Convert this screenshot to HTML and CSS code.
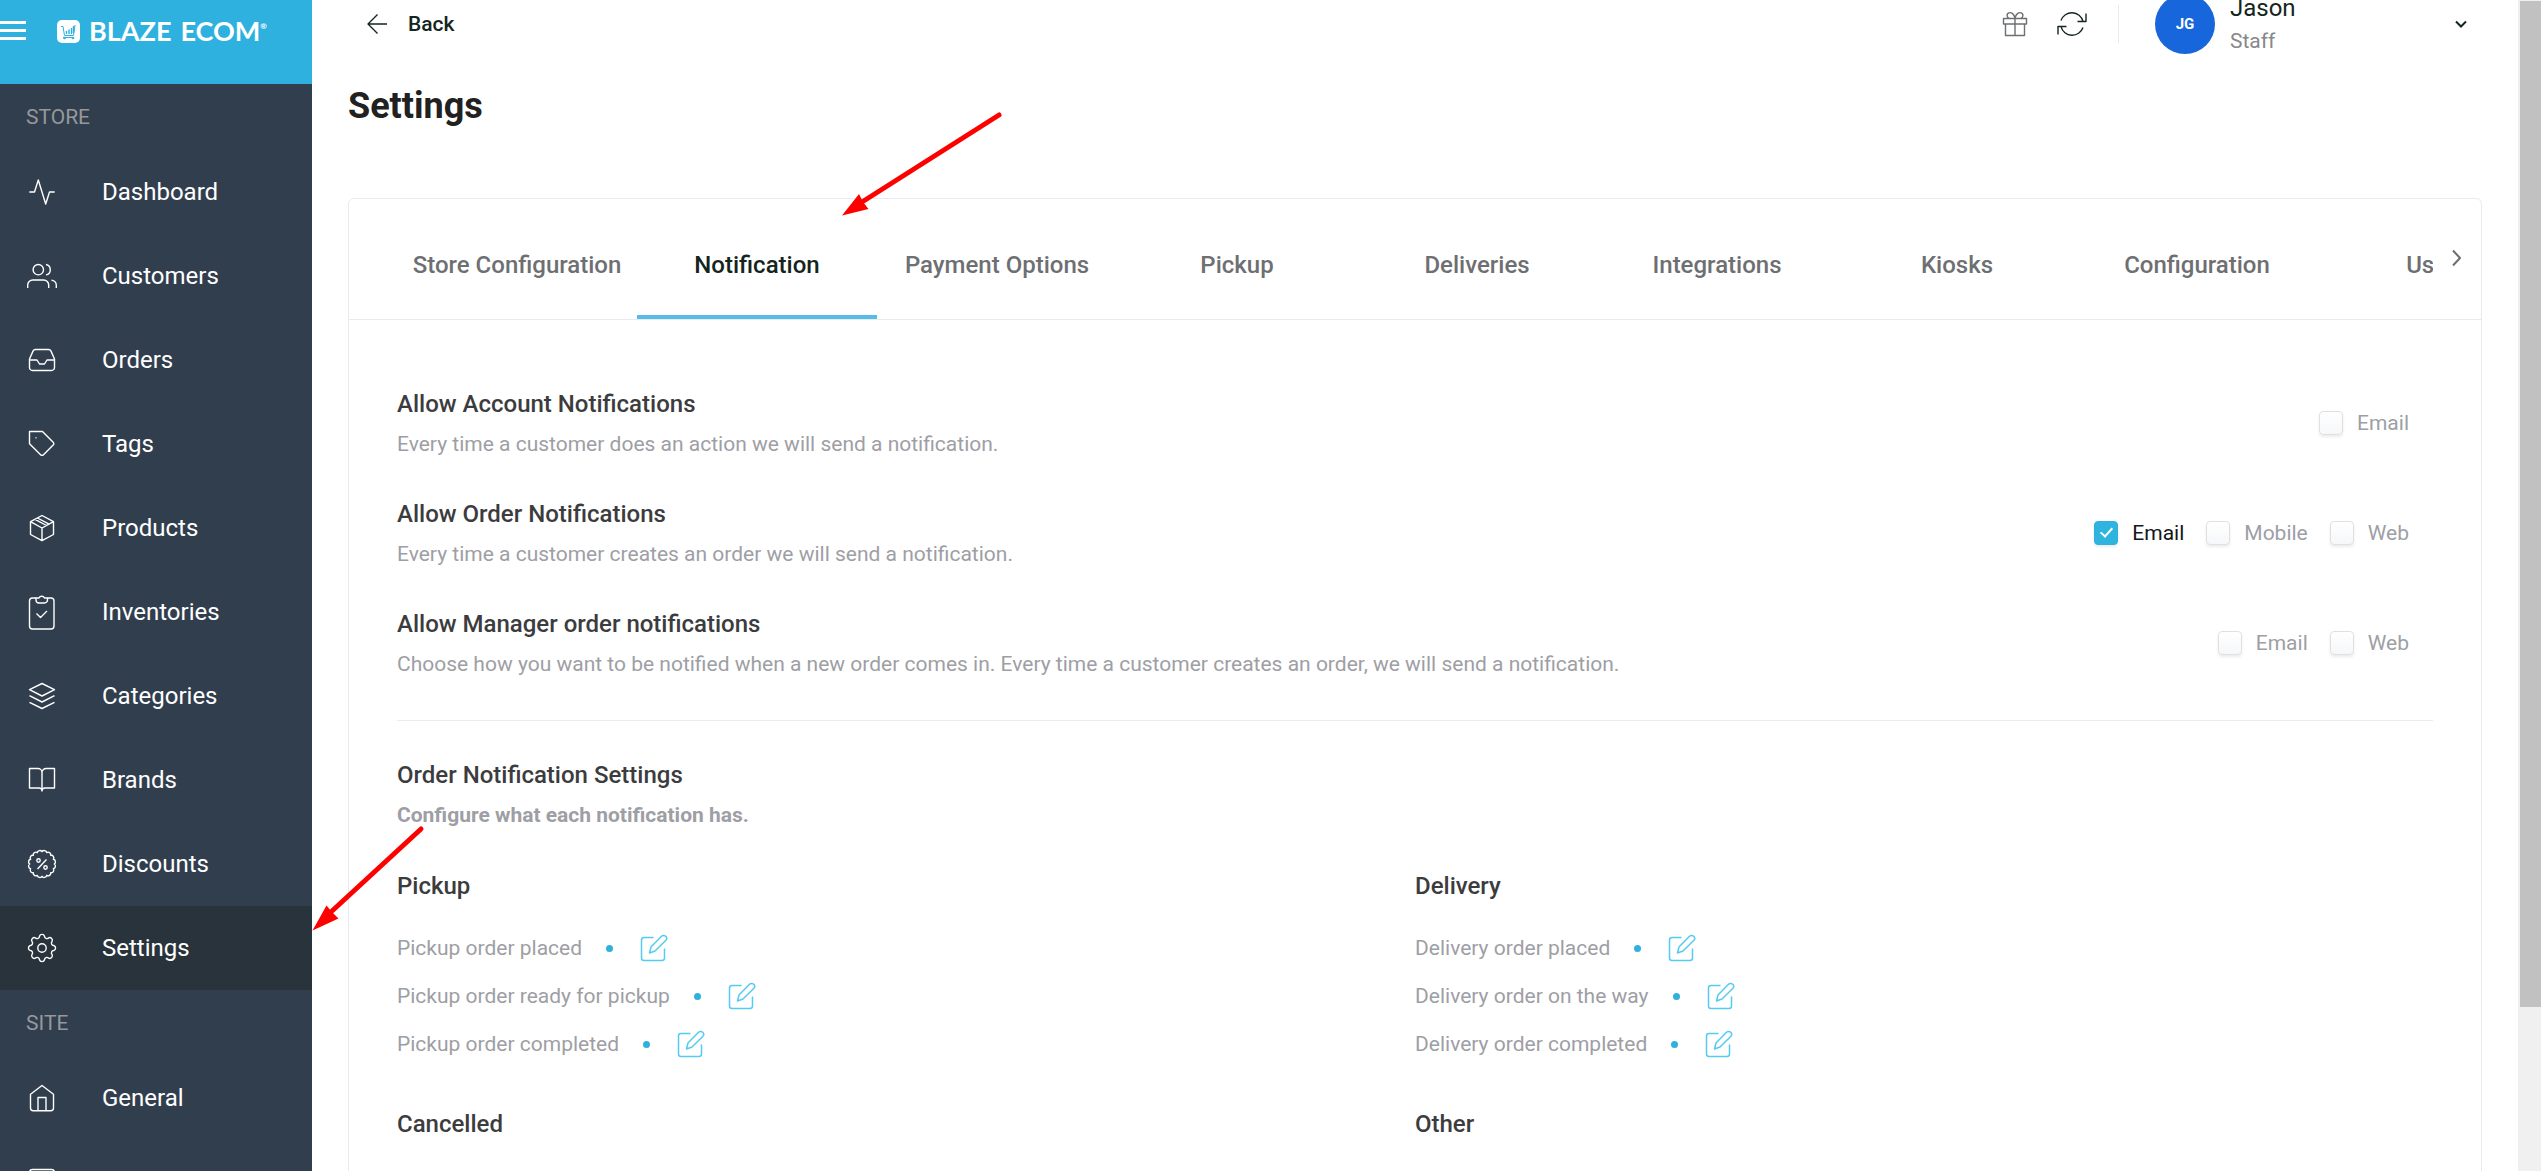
FILE: index.html
```html
<!DOCTYPE html>
<html lang="en">
<head>
    <meta charset="UTF-8">
    <meta name="viewport" content="width=device-width, initial-scale=1.0">
    <title>Settings</title>
    <link rel="stylesheet" href="styles.css">
</head>
<body>
    <aside class="sidebar">
        <div class="brand">
            <button type="button" class="menu-btn" aria-label="Menu"><span></span><span></span><span></span></button>
            <a href="#" class="logo">
                <svg class="logo-mark" viewBox="0 0 23 23">
                    <rect width="23" height="23" rx="5" fill="#fff"/>
                    <path d="M4 6.500h2l1.500 9h9L18 5M6 17.500h11" fill="none" stroke="#2eb1de" stroke-width="1"/>
                    <path d="M9.500 14v-3M12 14v-4.500M14.500 14V8M16.500 13V6" stroke="#2eb1de" stroke-width="1.400"/>
                    <circle cx="7.500" cy="18" r="1.300" fill="#2eb1de"/>
                    <circle cx="16" cy="18" r="1.300" fill="#2eb1de"/>
                </svg>
                <span>BLAZE</span><span>ECOM<sup>®</sup></span>
            </a>
        </div>
        <nav>
            <h2 class="nav-title">STORE</h2>
            <a href="#" class="nav-item">
                <svg class="icon" viewBox="0 0 32 32"><path d="M3.300 16h5.200l3.800-12 7.400 24 3.800-12h5.200"/></svg>
                Dashboard
            </a>
            <a href="#" class="nav-item">
                <svg class="icon" viewBox="0 0 32 32"><circle cx="12.300" cy="9.700" r="5.200"/><path d="M1.700 28v-3a5 5 0 0 1 5-5h11a5 5 0 0 1 5 5v3M20 4.500a5.300 5.300 0 0 1 0 10.400M25.500 20.200a5 5 0 0 1 4.800 5V28"/></svg>
                Customers
            </a>
            <a href="#" class="nav-item">
                <svg class="icon" viewBox="0 0 32 32"><path d="M3.500 16H11l2.500 4h5l2.500-4h7.500"/><path d="M9.500 5.500h13a3 3 0 0 1 2.500 1.600l3.500 7.900v8.500a3 3 0 0 1-3 3h-19a3 3 0 0 1-3-3V15L7 7.100a3 3 0 0 1 2.500-1.600z"/></svg>
                Orders
            </a>
            <a href="#" class="nav-item">
                <svg class="icon" viewBox="0 0 32 32"><path d="M3.500 3.500h13l10.700 10.700a2 2 0 0 1 0 2.900l-9.700 9.700a2 2 0 0 1-2.900 0L3.500 15.700z"/><path d="M9.500 9.800h1"/></svg>
                Tags
            </a>
            <a href="#" class="nav-item">
                <svg class="icon" viewBox="0 0 32 32"><path d="M16 3.500l11.500 6.200v12.800L16 28.700 4.500 22.500V9.700zM4.500 9.700L16 16l11.500-6.300M16 16v12.700M9 7.300l11.500 6.200M11.500 6L23 12.200"/></svg>
                Products
            </a>
            <a href="#" class="nav-item">
                <svg class="icon" viewBox="0 0 32 32"><path d="M10 2H6.500a3 3 0 0 0-3 3v25a3 3 0 0 0 3 3H25a3 3 0 0 0 3-3V5a3 3 0 0 0-3-3h-3.500"/><path d="M10 2h3a3 3 0 0 1 5.500 0h3v2a3 3 0 0 1-3 3H13a3 3 0 0 1-3-3zM10.500 17.500l4 4L21 15"/></svg>
                Inventories
            </a>
            <a href="#" class="nav-item">
                <svg class="icon" viewBox="0 0 32 32"><path d="M16 3.500l12.500 6.200L16 16 3.500 9.700zM3.500 15.700L16 22l12.500-6.300M3.500 22.300L16 28.500l12.500-6.200"/></svg>
                Categories
            </a>
            <a href="#" class="nav-item">
                <svg class="icon" viewBox="0 0 32 32"><path d="M3.500 4.500H12a4 4 0 0 1 4 4V27a3 3 0 0 0-3-3H3.500zM28.500 4.500H20a4 4 0 0 0-4 4V27a3 3 0 0 1 3-3h9.500z"/></svg>
                Brands
            </a>
            <a href="#" class="nav-item">
                <svg class="icon" viewBox="0 0 32 32"><path d="M28.300 16a2.600 2.600 0 0 1-.94 4.710a2.600 2.600 0 0 1-2.660 3.990a2.600 2.600 0 0 1-3.990 2.660a2.600 2.600 0 0 1-4.710.94a2.600 2.600 0 0 1-4.710-.94a2.600 2.600 0 0 1-3.990-2.660a2.600 2.600 0 0 1-2.660-3.990a2.600 2.600 0 0 1-.94-4.710a2.600 2.600 0 0 1 .94-4.710a2.600 2.600 0 0 1 2.660-3.990a2.600 2.600 0 0 1 3.990-2.660a2.600 2.600 0 0 1 4.710-.94a2.600 2.600 0 0 1 4.710.94a2.600 2.600 0 0 1 3.990 2.660a2.600 2.600 0 0 1 2.660 3.990a2.600 2.600 0 0 1 .94 4.710z"/><path d="M20.500 11.500l-9 9.500"/><circle cx="12.500" cy="12.500" r="1.700"/><circle cx="19.500" cy="19.500" r="1.700"/></svg>
                Discounts
            </a>
            <a href="#" class="nav-item active">
                <svg class="icon" viewBox="0 0 32 32"><path d="M27.700 13.500a2.600 2.600 0 0 1 0 5a2.400 2.400 0 0 0-1.640 4.040a2.600 2.600 0 0 1-3.520 3.520a2.400 2.400 0 0 0-4.040 1.640a2.600 2.600 0 0 1-5 0a2.400 2.400 0 0 0-4.040-1.640a2.600 2.600 0 0 1-3.520-3.520a2.400 2.400 0 0 0-1.640-4.040a2.600 2.600 0 0 1 0-5a2.400 2.400 0 0 0 1.640-4.040a2.600 2.600 0 0 1 3.520-3.520a2.400 2.400 0 0 0 4.040-1.640a2.600 2.600 0 0 1 5 0a2.400 2.400 0 0 0 4.040 1.640a2.600 2.600 0 0 1 3.520 3.520a2.400 2.400 0 0 0 1.640 4.040z"/><circle cx="16" cy="16" r="4.200"/></svg>
                Settings
            </a>
            <h2 class="nav-title">SITE</h2>
            <a href="#" class="nav-item">
                <svg class="icon" viewBox="0 0 32 32"><path d="M4.500 12.300L16 3.500l11.500 8.800V26a2.700 2.700 0 0 1-2.700 2.700H7.200A2.700 2.700 0 0 1 4.500 26zM12 28.700V15.500h8v13.200"/></svg>
                General
            </a>
            <a href="#" class="nav-item" aria-label="Pages">
                <svg class="icon" viewBox="0 0 32 32"><rect x="3.500" y="3.500" width="25" height="25" rx="3"/></svg>
            </a>
        </nav>
    </aside>

    <main class="main">
        <header class="topbar">
            <a href="#" class="back">
                <svg class="icon" viewBox="0 0 32 32"><path d="M16.500 6.500L7 16l9.500 9.500M7 16h19"/></svg>
                Back
            </a>
            <div class="topbar-right">
                <button type="button" class="icon-btn gift" aria-label="Gifts">
                    <svg class="icon" viewBox="0 0 32 32"><rect x="4.500" y="10.500" width="23" height="5.500"/><path d="M6.500 16v11.500h19V16M16 10.500v17M16 10c-1-4-3.500-6-6-5.200-3 1-2 4.500 0 5.700M16 10c1-4 3.500-6 6-5.200 3 1 2 4.500 0 5.700"/></svg>
                </button>
                <button type="button" class="icon-btn" aria-label="Refresh">
                    <svg class="icon" viewBox="0 0 32 32"><path d="M5 12.500a11.500 11.500 0 0 1 22 .9M30 5.500v8h-8.500M27 19.500a11.500 11.500 0 0 1-22-.9M2 26.500v-8h8.500"/></svg>
                </button>
                <button type="button" class="user">
                    <span class="avatar">JG</span>
                    <span class="user-text"><span class="user-name">Jason</span><span class="user-role">Staff</span></span>
                    <svg class="chevron" viewBox="0 0 16 16"><path d="M3 5.500l5 5 5-5"/></svg>
                </button>
            </div>
        </header>

        <h1>Settings</h1>

        <section class="card">
            <div class="tabs">
                <div class="tab-list">
                    <a href="#" class="tab">Store Configuration</a>
                    <a href="#" class="tab active">Notification</a>
                    <a href="#" class="tab">Payment Options</a>
                    <a href="#" class="tab">Pickup</a>
                    <a href="#" class="tab">Deliveries</a>
                    <a href="#" class="tab">Integrations</a>
                    <a href="#" class="tab">Kiosks</a>
                    <a href="#" class="tab">Configuration</a>
                    <a href="#" class="tab">Users</a>
                </div>
                <button type="button" class="tabs-next" aria-label="Next tabs">
                    <svg class="icon" viewBox="0 0 32 32"><path d="M12 8.500l7 7.500-7 7.500"/></svg>
                </button>
            </div>

            <form class="content">
                <div class="setting">
                    <div>
                        <h3>Allow Account Notifications</h3>
                        <p>Every time a customer does an action we will send a notification.</p>
                    </div>
                    <div class="checks">
                        <label><input type="checkbox" name="account_email"><span>Email</span></label>
                    </div>
                </div>
                <div class="setting">
                    <div>
                        <h3>Allow Order Notifications</h3>
                        <p>Every time a customer creates an order we will send a notification.</p>
                    </div>
                    <div class="checks">
                        <label><input type="checkbox" name="order_email" checked><span>Email</span></label>
                        <label><input type="checkbox" name="order_mobile"><span>Mobile</span></label>
                        <label><input type="checkbox" name="order_web"><span>Web</span></label>
                    </div>
                </div>
                <div class="setting">
                    <div>
                        <h3>Allow Manager order notifications</h3>
                        <p>Choose how you want to be notified when a new order comes in. Every time a customer creates an order, we will send a notification.</p>
                    </div>
                    <div class="checks">
                        <label><input type="checkbox" name="manager_email"><span>Email</span></label>
                        <label><input type="checkbox" name="manager_web"><span>Web</span></label>
                    </div>
                </div>
                <hr>
                <h3>Order Notification Settings</h3>
                <p class="strong">Configure what each notification has.</p>
                <div class="groups">
                    <div class="group">
                        <h3>Pickup</h3>
                        <ul>
                            <li>Pickup order placed <i class="dot"></i>
                                <button type="button" class="edit" aria-label="Edit"><svg viewBox="0 0 28 28"><path d="M13.500 3.500H4a2.500 2.500 0 0 0-2.500 2.500v18A2.500 2.500 0 0 0 4 26.500h18a2.500 2.500 0 0 0 2.500-2.500v-9.500M9.500 19l1.500-6L21.500 2.300a2.900 2.900 0 0 1 4.200 4.200L15 17z"/></svg></button></li>
                            <li>Pickup order ready for pickup <i class="dot"></i>
                                <button type="button" class="edit" aria-label="Edit"><svg viewBox="0 0 28 28"><path d="M13.500 3.500H4a2.500 2.500 0 0 0-2.500 2.500v18A2.500 2.500 0 0 0 4 26.500h18a2.500 2.500 0 0 0 2.500-2.500v-9.500M9.500 19l1.500-6L21.500 2.300a2.900 2.900 0 0 1 4.200 4.200L15 17z"/></svg></button></li>
                            <li>Pickup order completed <i class="dot"></i>
                                <button type="button" class="edit" aria-label="Edit"><svg viewBox="0 0 28 28"><path d="M13.500 3.500H4a2.500 2.500 0 0 0-2.500 2.500v18A2.500 2.500 0 0 0 4 26.500h18a2.500 2.500 0 0 0 2.500-2.500v-9.500M9.500 19l1.500-6L21.500 2.300a2.900 2.900 0 0 1 4.200 4.200L15 17z"/></svg></button></li>
                        </ul>
                    </div>
                    <div class="group">
                        <h3>Delivery</h3>
                        <ul>
                            <li>Delivery order placed <i class="dot"></i>
                                <button type="button" class="edit" aria-label="Edit"><svg viewBox="0 0 28 28"><path d="M13.500 3.500H4a2.500 2.500 0 0 0-2.500 2.500v18A2.500 2.500 0 0 0 4 26.500h18a2.500 2.500 0 0 0 2.500-2.500v-9.500M9.500 19l1.500-6L21.500 2.300a2.900 2.900 0 0 1 4.200 4.200L15 17z"/></svg></button></li>
                            <li>Delivery order on the way <i class="dot"></i>
                                <button type="button" class="edit" aria-label="Edit"><svg viewBox="0 0 28 28"><path d="M13.500 3.500H4a2.500 2.500 0 0 0-2.500 2.500v18A2.500 2.500 0 0 0 4 26.500h18a2.500 2.500 0 0 0 2.500-2.500v-9.500M9.500 19l1.500-6L21.500 2.300a2.900 2.900 0 0 1 4.200 4.200L15 17z"/></svg></button></li>
                            <li>Delivery order completed <i class="dot"></i>
                                <button type="button" class="edit" aria-label="Edit"><svg viewBox="0 0 28 28"><path d="M13.500 3.500H4a2.500 2.500 0 0 0-2.500 2.500v18A2.500 2.500 0 0 0 4 26.500h18a2.500 2.500 0 0 0 2.500-2.500v-9.500M9.500 19l1.500-6L21.500 2.300a2.900 2.900 0 0 1 4.200 4.200L15 17z"/></svg></button></li>
                        </ul>
                    </div>
                    <div class="group"><h3>Cancelled</h3></div>
                    <div class="group"><h3>Other</h3></div>
                </div>
            </form>
        </section>
    </main>

    <div class="scrollbar"><div class="scrollbar-thumb"></div></div>

    <!-- arrows over the page -->
    <svg class="arrow arrow-tab" viewBox="0 0 164 108"><path d="M159 5L22 92" stroke="#f00" stroke-width="5" stroke-linecap="round"/><path d="M2 105.500L19 84l4 8 5.500 7z" fill="#f00"/></svg>
    <svg class="arrow arrow-nav" viewBox="0 0 114 106"><path d="M109 5L20 87" stroke="#f00" stroke-width="5" stroke-linecap="round"/><path d="M.5 106.500l14-25 5 6 7 7z" fill="#f00"/></svg>
</body>
</html>
```
FILE: styles.css
```css
* {
    box-sizing: border-box;
}
body {
    font-family: Roboto, sans-serif;
    margin: 0;
    display: flex;
    position: relative;
    height: 100vh;
    overflow: hidden;
    background: #fff;
    color: #3c3c3e;
    font-size: 21px;
}
h1, h2, h3, p, ul {
    margin: 0;
    padding: 0;
}
a {
    color: inherit;
    text-decoration: none;
}
button {
    font-family: inherit;
    padding: 0;
    border: none;
    background: none;
    cursor: pointer;
}
.icon {
    width: 32px;
    height: 32px;
    flex: none;
    fill: none;
    stroke: currentColor;
    stroke-width: 1.4;
    stroke-linejoin: round;
    overflow: visible;
}

/* sidebar */
.sidebar {
    width: 312px;
    flex: none;
    background: #313e4e;
    color: #fff;
    overflow: hidden;
}
.brand {
    display: flex;
    align-items: flex-start;
    gap: 31px;
    height: 84px;
    padding-top: 19px;
    background: #2eb1de;
}
.menu-btn {
    display: flex;
    flex-direction: column;
    gap: 5px;
    width: 26px;
    padding-top: 2px;
}
.menu-btn span {
    height: 3px;
    background: #fff;
}
.logo {
    display: flex;
    align-items: center;
    gap: 9px;
    font-family: Lato, sans-serif;
    font-size: 27px;
    font-weight: 700;
    line-height: 24px;
}
.logo-mark {
    width: 23px;
    height: 23px;
}
.logo sup {
    font-size: 8px;
    line-height: 8px;
    vertical-align: 12px;
}
.nav-title {
    padding-left: 26px;
    font-size: 21px;
    font-weight: 400;
    line-height: 66px;
    color: #96989b;
}
.nav-item {
    display: flex;
    align-items: center;
    gap: 44px;
    height: 84px;
    padding-left: 26px;
    font-size: 24px;
}
.nav-item.active {
    background: #29333b;
}

/* header */
.main {
    flex: 1;
    min-width: 0;
    padding: 0 36px;
    overflow: hidden;
}
.topbar {
    display: flex;
    align-items: center;
    justify-content: space-between;
    height: 48px;
    padding: 0 13px;
    color: #14251e;
}
.back {
    display: flex;
    align-items: center;
    gap: 15px;
    font-weight: 500;
}
.topbar-right {
    display: flex;
    align-items: center;
}
.icon-btn {
    height: 32px;
    margin-right: 25px;
    color: #14251e;
}
.icon-btn.gift {
    color: #6e6f72;
}
.user {
    display: flex;
    align-items: center;
    gap: 15px;
    width: 351px;
    height: 38px;
    margin-left: 5px;
    padding-left: 36px;
    border-left: 1px solid #e9e9f2;
    text-align: left;
    color: #14251e;
}
.avatar {
    width: 60px;
    height: 60px;
    border-radius: 50%;
    background: #1766db;
    color: #fff;
    font-size: 15px;
    font-weight: 700;
    line-height: 60px;
    text-align: center;
}
.user-text {
    flex: 1;
    padding-top: 2px;
    line-height: 33px;
}
.user-text span {
    display: block;
}
.user-name {
    font-size: 24px;
}
.user-role {
    font-size: 21px;
    color: #87888a;
}
.chevron {
    width: 16px;
    height: 16px;
    fill: none;
    stroke: currentColor;
    stroke-width: 2;
}
h1 {
    margin: 34px 0 68px;
    font-size: 36px;
    font-weight: 700;
    line-height: 48px;
    color: #212121;
}

/* card and tabs */
.card {
    min-height: 1000px;
    border: 1px solid #e9e9f2;
    border-radius: 6px;
}
.tabs {
    display: flex;
    padding-left: 48px;
    border-bottom: 1px solid #e9e9f2;
}
.tab-list {
    display: flex;
    flex: 1;
    overflow: hidden;
}
.tab {
    flex: none;
    width: 240px;
    height: 120px;
    padding-top: 4px;
    border-bottom: 4px solid transparent;
    font-size: 24px;
    font-weight: 500;
    line-height: 124px;
    text-align: center;
    color: #6e6f72;
}
.tab.active {
    color: #14251e;
    border-color: #55bde6;
}
.tabs-next {
    width: 48px;
    color: #6e6f72;
}
.tabs-next .icon {
    stroke-width: 2;
}

/* content */
.content {
    padding: 64px 48px 0;
}
h3 {
    font-size: 24px;
    font-weight: 500;
    line-height: 40px;
}
p {
    line-height: 40px;
    color: #9e9ea5;
}
.setting {
    display: flex;
    align-items: center;
    justify-content: space-between;
    margin-bottom: 30px;
}
.checks {
    display: flex;
    gap: 22px;
    padding: 0 24px 3px 0;
}
.checks label {
    display: flex;
    align-items: center;
    gap: 14px;
    color: #9e9ea5;
}
.checks input {
    appearance: none;
    width: 24px;
    height: 24px;
    margin: 0;
    border: 1px solid #e2e1d9;
    border-radius: 4px;
    background: linear-gradient(#fff, #f5f7fa);
    box-shadow: 0 2px 3px rgba(0,0,0,0.08);
}
.checks input:checked {
    display: grid;
    place-items: center;
    border-color: #2eb1de;
    background: #2eb4df;
}
.checks input:checked::after {
    content: "";
    width: 5px;
    height: 10px;
    margin-bottom: 3px;
    border: solid #fff;
    border-width: 0 2px 2px 0;
    transform: rotate(42deg);
}
.checks input:checked + span {
    color: #14171a;
}
hr {
    margin: 36px 0 34px;
    border: none;
    border-top: 1px solid #ececf2;
}
.strong {
    font-weight: 700;
}
.groups {
    display: grid;
    grid-template-columns: 1fr 1fr;
    row-gap: 36px;
    margin-top: 31px;
}
.group ul {
    margin-top: 18px;
    list-style: none;
}
.group li {
    display: flex;
    align-items: center;
    height: 48px;
    color: #9e9ea5;
}
.dot {
    width: 7px;
    height: 7px;
    margin: 0 27px 0 24px;
    border-radius: 50%;
    background: #2eb1de;
}
.edit, .edit svg {
    width: 28px;
    height: 28px;
}
.edit svg {
    display: block;
    fill: none;
    stroke: #55cbf3;
    stroke-width: 1.5;
    stroke-linejoin: round;
}

.scrollbar {
    width: 23px;
    flex: none;
    padding: 1px 0 0 2px;
    background: #f0f0f0;
}
.scrollbar-thumb {
    height: 86%;
    background: #c1c1c1;
}

.arrow {
    position: absolute;
    fill: none;
}
.arrow-tab {
    left: 840px;
    top: 110px;
    width: 164px;
    height: 108px;
}
.arrow-nav {
    left: 312px;
    top: 824px;
    width: 114px;
    height: 106px;
    overflow: visible;
}
```
